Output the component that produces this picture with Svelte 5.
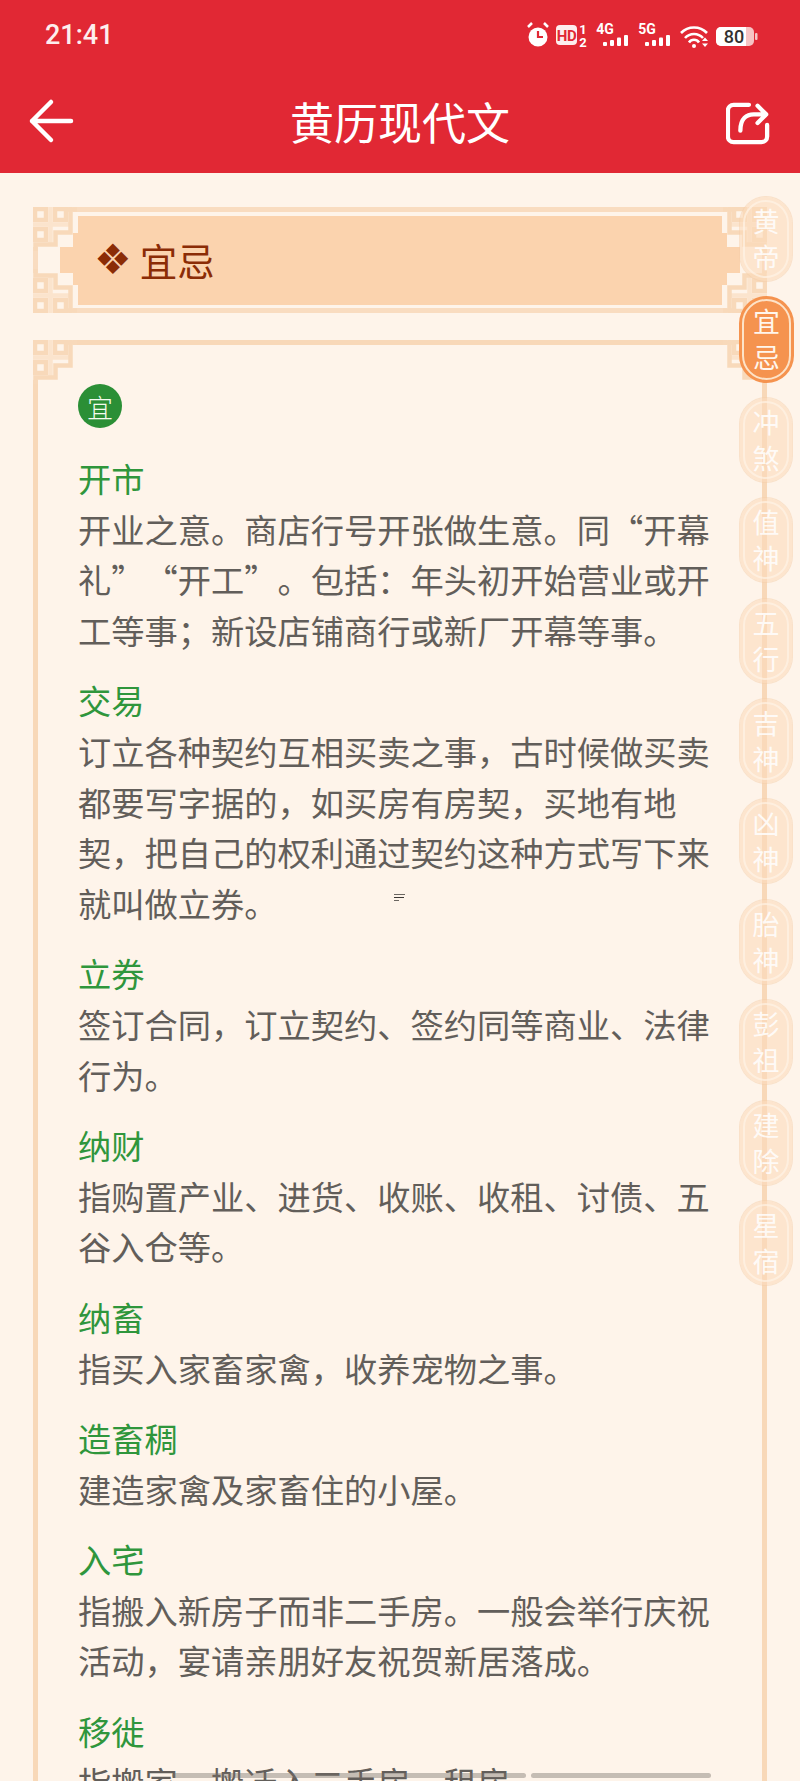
<script lang="ts">
  const nav = ['黄帝', '宜忌', '冲煞', '值神', '五行', '吉神', '凶神', '胎神', '彭祖', '建除', '星宿'];

  const items = [
    { name: '开市', text: '开业之意。商店行号开张做生意。同“开幕礼”“开工”。包括：年头初开始营业或开工等事；新设店铺商行或新厂开幕等事。' },
    { name: '交易', text: '订立各种契约互相买卖之事，古时候做买卖都要写字据的，如买房有房契，买地有地契，把自己的权利通过契约这种方式写下来就叫做立券。' },
    { name: '立券', text: '签订合同，订立契约、签约同等商业、法律行为。' },
    { name: '纳财', text: '指购置产业、进货、收账、收租、讨债、五谷入仓等。' },
    { name: '纳畜', text: '指买入家畜家禽，收养宠物之事。' },
    { name: '造畜稠', text: '建造家禽及家畜住的小屋。' },
    { name: '入宅', text: '指搬入新房子而非二手房。一般会举行庆祝活动，宴请亲朋好友祝贺新居落成。' },
    { name: '移徙', text: '指搬家、搬迁入二手房、租房' }
  ];

  const bars = [[0, 4], [7, 6], [14, 8.5], [21, 11]];
</script>

{#snippet fret()}
  <rect class="mask" x="0" y="0" width="40" height="40" />
  <g class="fret">
    <rect x="2" y="2" width="11" height="11" />
    <rect x="22" y="2" width="11" height="11" />
    <rect x="2" y="22" width="11" height="11" />
    <path class="band" d="M0 17.5H37M17.5 0V37" />
    <path d="M35 2.500H44M37.5 0V25.5H22.5V37.5H2.5V44" />
  </g>
{/snippet}

{#snippet signal(x)}
  {#each bars as [dx, h]}
    <rect x={x + dx} y={36 - h} width="4" height={h} rx="1" />
  {/each}
{/snippet}

<div class="page" lang="zh-CN">
  <header>
    <div class="status">
      <span class="time">21:41</span>
      <svg class="status-icons" width="280" height="50" viewBox="0 0 280 50">
        <g fill="#fff">
          <circle cx="28" cy="27" r="9.5" />
          <path d="M18 17l4-4M38 17l-4-4" stroke="#fff" stroke-width="2.5" fill="none" />
          <path d="M28 21v6h5" stroke="#e12834" stroke-width="2.2" fill="none" />
          <rect x="46" y="15" width="21" height="20" rx="4" fill="#fdeeee" />
          <text class="hd" x="56.5" y="30.500">HD</text>
          <text class="tiny" x="73" y="24">1</text>
          <text class="tiny" x="73" y="37">2</text>
          <text class="small" x="95" y="24">4G</text>
          {@render signal(93)}
          <text class="small" x="137" y="24">5G</text>
          {@render signal(135)}
          <path d="M171 23a18 18 0 0 1 26 0M175 28a12 12 0 0 1 18 0M179 32.5a6 6 0 0 1 10 0" stroke="#fff" stroke-width="2.6" fill="none" />
          <circle cx="184" cy="36" r="2" />
          <path d="M192 31h6l-3-3.500zM192 33.500h6l-3 3.500z" />
          <rect x="206" y="17" width="38" height="19" rx="5" fill="#f6c4c4" />
          <path d="M211 17h25v19h-25a5 5 0 0 1-5-5v-9a5 5 0 0 1 5-5z" />
          <rect x="245" y="23" width="2.5" height="7" rx="1" fill="#f6c4c4" />
          <text class="batt" x="224" y="33">80</text>
        </g>
      </svg>
    </div>
    <div class="bar">
      <svg class="icon" width="46" height="46" viewBox="0 0 46 46">
        <path d="M4 23H43M23 4L4 23L23 42" />
      </svg>
      <h1>黄历现代文</h1>
      <svg class="icon share" width="44" height="44" viewBox="0 0 46 44">
        <path d="M24 3H8a6 6 0 0 0-6 6V36a6 6 0 0 0 6 6H37a6 6 0 0 0 6-6V24" />
        <path d="M15 30C15 17 22 13 29 13H42M33 4L42 13L33 22" />
      </svg>
    </div>
  </header>

  <main>
    <section class="heading">
      <svg class="frame" width="734" height="106" viewBox="0 0 734 106">
        <polygon class="fill" points="45,9 689,9 689,26 707,26 707,78 689,78 689,98 45,98 45,78 27,78 27,26 45,26" />
        <rect class="edge" x="38" y="0" width="658" height="5" />
        <rect class="edge" x="38" y="101" width="658" height="5" />
        <rect class="edge" x="0" y="36" width="5" height="34" />
        <rect class="edge" x="729" y="36" width="5" height="34" />
        <g>{@render fret()}</g>
        <g transform="translate(734 0) scale(-1 1)">{@render fret()}</g>
        <g transform="translate(0 106) scale(1 -1)">{@render fret()}</g>
        <g transform="translate(734 106) scale(-1 -1)">{@render fret()}</g>
      </svg>
      <h2><span class="mark">❖</span>宜忌</h2>
    </section>

    <section class="card">
      <svg class="corner left" width="44" height="44" viewBox="0 0 44 44">{@render fret()}</svg>
      <svg class="corner right" width="44" height="44" viewBox="0 0 44 44">{@render fret()}</svg>
      <div class="badge">宜</div>
      {#each items as item}
        <div class="item">
          <h3>{item.name}</h3>
          <p>{item.text}</p>
        </div>
      {/each}
    </section>
  </main>

  <nav>
    {#each nav as label, i}
      <div class="pill" class:active={i === 1}>
        <span>{label[0]}</span>
        <span>{label[1]}</span>
      </div>
    {/each}
  </nav>

  <div class="speck"><i></i><i></i><i></i></div>

  <div class="home">
    <i class="one"></i>
    <i class="two"></i>
  </div>
</div>

<style>
  :global(body) {
    margin: 0;
    background: #fef4ea;
  }

  .page {
    position: relative;
    width: 800px;
    height: 1781px;
    overflow: hidden;
    background: #fef4ea;
    font-family: "Noto Sans CJK SC", "Noto Sans", sans-serif;
    text-spacing-trim: space-all;
  }

  header {
    height: 173px;
    background: #e12834;
    color: #fff;
  }

  .status {
    display: flex;
    justify-content: space-between;
    align-items: center;
    height: 70px;
    padding: 0 10px 0 45px;
  }

  .time {
    font-family: Roboto, sans-serif;
    font-size: 27px;
    font-weight: 500;
    color: #fdeeee;
  }

  .status-icons text {
    font-family: Roboto, sans-serif;
    font-weight: 700;
    text-anchor: middle;
  }

  .status-icons .hd {
    font-size: 15px;
    letter-spacing: -0.5px;
    fill: #e12834;
  }

  .status-icons .tiny {
    font-size: 13px;
  }

  .status-icons .small {
    font-size: 14px;
  }

  .status-icons .batt {
    font-size: 18px;
    font-weight: 500;
    fill: #33302f;
  }

  .bar {
    display: flex;
    align-items: center;
    justify-content: space-between;
    height: 103px;
    padding: 0 30px 0 28px;
    margin-top: -1px;
  }

  .bar h1 {
    margin: 0;
    font-size: 44px;
    font-weight: 400;
    line-height: 1;
  }

  .icon {
    fill: none;
    stroke: #fff;
    stroke-width: 4.5;
    stroke-linecap: round;
    stroke-linejoin: round;
  }

  .share {
    margin-top: 4px;
  }

  main {
    padding: 34px 33px 0;
  }

  .heading {
    position: relative;
    height: 106px;
  }

  .frame {
    position: absolute;
    inset: 0;
  }

  .fill {
    fill: #fbd3ae;
  }

  .edge {
    fill: #f9dcc0;
  }

  .mask {
    fill: #fef4ea;
  }

  .fret {
    fill: none;
    stroke: #f8d9ba;
    stroke-width: 4.500;
  }

  .fret .band {
    stroke: #fbe4cd;
  }

  .heading h2 {
    position: relative;
    display: flex;
    align-items: center;
    gap: 8px;
    margin: 0;
    height: 106px;
    padding-left: 61px;
    font-size: 37.5px;
    font-weight: 400;
    line-height: 1;
    color: #8b2c06;
  }

  .mark {
    font-family: "DejaVu Sans", sans-serif;
    font-size: 42px;
    line-height: 1;
  }

  .card {
    position: relative;
    margin-top: 27px;
    padding: 39px 51px 0 40px;
    border: 5px solid #f8d8b8;
    border-bottom: 0;
    height: 1500px;
    box-sizing: border-box;
  }

  .corner {
    position: absolute;
    top: -5px;
  }

  .corner.left {
    left: -5px;
  }

  .corner.right {
    right: -5px;
    transform: scaleX(-1);
  }

  .badge {
    display: flex;
    align-items: center;
    justify-content: center;
    width: 44px;
    height: 44px;
    margin-bottom: 25px;
    border-radius: 50%;
    background: #2b8f36;
    color: #f4fbef;
    font-size: 26px;
    font-weight: 300;
  }

  .item {
    margin-bottom: 20px;
    font-size: 33.25px;
    line-height: 50.6px;
  }

  .item h3 {
    margin: 0;
    font-size: inherit;
    font-weight: 400;
    color: #2f963c;
  }

  .item p {
    margin: 0;
    color: #625e5a;
  }

  nav {
    position: absolute;
    top: 197px;
    left: 740px;
    display: flex;
    flex-direction: column;
    gap: 16.4px;
  }

  .pill {
    position: relative;
    display: flex;
    flex-direction: column;
    align-items: center;
    justify-content: center;
    box-sizing: border-box;
    width: 52px;
    height: 84px;
    border-radius: 26px;
    background: rgba(251, 218, 186, 0.6);
    box-shadow: 0 0 0 1px rgba(245, 205, 168, 0.5);
    color: rgba(255, 255, 255, 0.85);
    font-size: 27px;
    line-height: 36px;
  }

  .pill::before {
    content: "";
    position: absolute;
    inset: 3px;
    border: 2px solid rgba(255, 244, 232, 0.65);
    border-radius: 23px;
  }

  .pill span {
    position: relative;
  }

  .pill.active {
    width: 55px;
    height: 87px;
    margin: -1.5px 0 -1.5px -1px;
    border-radius: 28px;
    background: #f5934f;
    box-shadow: none;
    color: #fff6ec;
  }

  .pill.active::before {
    border-color: #fde3c8;
    border-radius: 25px;
  }

  .speck {
    position: absolute;
    left: 394px;
    top: 894px;
    display: flex;
    flex-direction: column;
    gap: 2px;
    width: 11px;
  }

  .speck i {
    height: 1px;
    background: #6b6661;
  }

  .speck i:nth-child(2) {
    width: 10px;
    background: #3c3835;
  }

  .speck i:last-child {
    width: 5px;
  }

  .home {
    position: absolute;
    left: 172px;
    top: 1773px;
    display: flex;
    gap: 5px;
  }

  .home i {
    height: 5px;
    border-radius: 3px;
    background: rgba(118, 112, 106, 0.42);
  }

  .home .one {
    width: 354px;
  }

  .home .two {
    width: 180px;
  }
</style>
